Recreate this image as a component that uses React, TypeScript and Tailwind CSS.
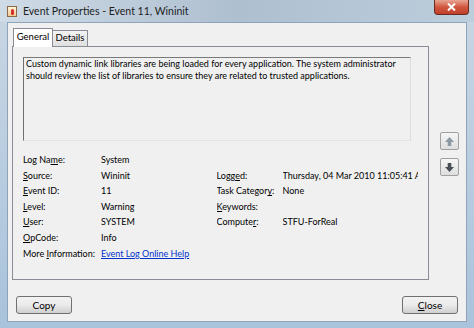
import React from "react";

const font = { fontFamily: 'Lato, "Noto Sans", sans-serif' };

// label with an access-key letter underlined
const Key = ({ pre, k, post }: { pre?: string; k: string; post?: string }) => (
  <span>
    {pre}
    <span className="underline underline-offset-1">{k}</span>
    {post}
  </span>
);

const ArrowButton = ({ dir }: { dir: "up" | "down" }) => (
  <div className="w-[19px] h-[18px] border border-[#a0a0a0] rounded-[2px] bg-gradient-to-b from-[#f6f6f6] to-[#dedede] flex items-center justify-center">
    <svg width="11" height="11" viewBox="0 0 11 11" className={dir === "down" ? "rotate-180" : ""}>
      <path d="M5.5 1 L10 6 H7.3 V10 H3.7 V6 H1 Z" fill={dir === "up" ? "#8e9aa3" : "#4a4f55"} />
    </svg>
  </div>
);

const Btn = ({ children }: { children: React.ReactNode }) => (
  <button className="w-[56px] h-[18px] border border-[#707070] rounded-[3px] bg-gradient-to-b from-[#f2f2f2] via-[#ebebeb] to-[#cfcfcf] text-[10px] leading-none text-black flex items-center justify-center">
    {children}
  </button>
);

export default function App() {
  const left: [React.ReactNode, React.ReactNode][] = [
    [<Key pre="Log Na" k="m" post="e:" />, "System"],
    [<Key k="S" post="ource:" />, "Wininit"],
    [<Key k="E" post="vent ID:" />, "11"],
    [<Key k="L" post="evel:" />, "Warning"],
    [<Key k="U" post="ser:" />, "SYSTEM"],
    [<Key k="O" post="pCode:" />, "Info"],
  ];
  const right: [React.ReactNode, React.ReactNode][] = [
    [<Key pre="Logg" k="e" post="d:" />, "Thursday, 04 Mar 2010 11:05:41 AM"],
    [<Key pre="Task Categor" k="y" post=":" />, "None"],
    [<Key k="K" post="eywords:" />, ""],
    [<Key pre="Compute" k="r" post=":" />, "STFU-ForReal"],
  ];

  return (
    <div
      className="w-[474px] h-[328px] overflow-hidden flex flex-col bg-gradient-to-b from-[#c9d6e3] via-[#b9cde0] to-[#a9c3dc] text-black"
      style={font}
    >
      {/* title bar */}
      <div className="h-[22px] flex items-start shrink-0 bg-gradient-to-r from-[#cfdbe6] via-[#aebfd0] to-[#bccddc]">
        <div className="mt-[6px] ml-[7px] w-[10px] h-[11px] border border-[#8a6a4a] bg-gradient-to-b from-[#fff4d8] to-[#f0c890] flex items-center justify-center">
          <div className="w-[3px] h-[6px] rounded-full bg-[#d0302a]" />
        </div>
        <span className="ml-[6px] mt-[4px] text-[10.5px] leading-[14px] text-[#1e1e1e]">
          Event Properties - Event 11, Wininit
        </span>
        <div className="ml-auto mr-[5px] w-[35px] h-[15px] rounded-b-[4px] border border-t-0 border-[#6b2a20] bg-gradient-to-b from-[#e8a493] via-[#d0563e] to-[#c0402a] flex items-center justify-center">
          <svg width="9" height="8" viewBox="0 0 9 8">
            <path d="M1 0.5 L8 7.5 M8 0.5 L1 7.5" stroke="white" strokeWidth="2" />
          </svg>
        </div>
      </div>

      {/* client area */}
      <div className="ml-[7px] mr-[7px] h-[300px] border border-[#8fa4b8] bg-[#f0f0f0] flex flex-col">
        <div className="flex mt-[4px]">
          <div className="ml-[4px] w-[417px] flex flex-col">
            {/* tabs */}
            <div className="flex items-end h-[19px] pl-[1px]">
              <div className="h-[19px] w-[40px] border border-b-0 border-[#898c95] bg-white text-[9.5px] flex items-center justify-center relative z-10 -mb-px pb-[1px]">
                General
              </div>
              <div className="h-[16px] w-[35px] border border-l-0 border-b-0 border-[#898c95] bg-gradient-to-b from-[#f3f3f3] to-[#e0e0e0] text-[9.5px] flex items-center justify-center">
                Details
              </div>
            </div>
            {/* panel */}
            <div className="h-[234px] border border-[#898c95] bg-[#f0f0f0] flex flex-col px-[10px] pt-[10px] text-[9px]">
              <div className="w-[388px] h-[84px] border border-[#a0a0a0] border-t-[#7a7a7a] border-l-[#6f6f6f] border-b-[#e3e3e3] border-r-[#dcdcdc] px-[2px] leading-[12px]">
                Custom dynamic link libraries are being loaded for every application. The system administrator should review the list of libraries to ensure they are related to trusted applications.
              </div>
              <div className="flex mt-[11px] leading-[15.6px]">
                <div className="w-[195px] grid grid-cols-[78px_1fr]">
                  {left.map(([l, v], i) => (
                    <React.Fragment key={i}>
                      <div>{l}</div>
                      <div>{v}</div>
                    </React.Fragment>
                  ))}
                </div>
                <div className="w-[203px] overflow-hidden grid grid-cols-[66px_1fr] content-start pt-[15.6px]">
                  {right.map(([l, v], i) => (
                    <React.Fragment key={i}>
                      <div className="whitespace-nowrap">{l}</div>
                      <div className="whitespace-nowrap overflow-hidden">{v}</div>
                    </React.Fragment>
                  ))}
                </div>
              </div>
              <div className="flex leading-[15.6px]">
                <div className="w-[78px] whitespace-nowrap">
                  More <Key k="I" post="nformation:" />
                </div>
                <span className="text-[#0033cc] underline underline-offset-1">Event Log Online Help</span>
              </div>
            </div>
          </div>
          {/* scroll arrows */}
          <div className="ml-[11px] mt-[105px] flex flex-col gap-[8px]">
            <ArrowButton dir="up" />
            <ArrowButton dir="down" />
          </div>
        </div>
        {/* buttons */}
        <div className="flex justify-between mt-[16px] pl-[8px] pr-[8px]">
          <Btn>Copy</Btn>
          <Btn>
            <Key k="C" post="lose" />
          </Btn>
        </div>
      </div>
    </div>
  );
}
